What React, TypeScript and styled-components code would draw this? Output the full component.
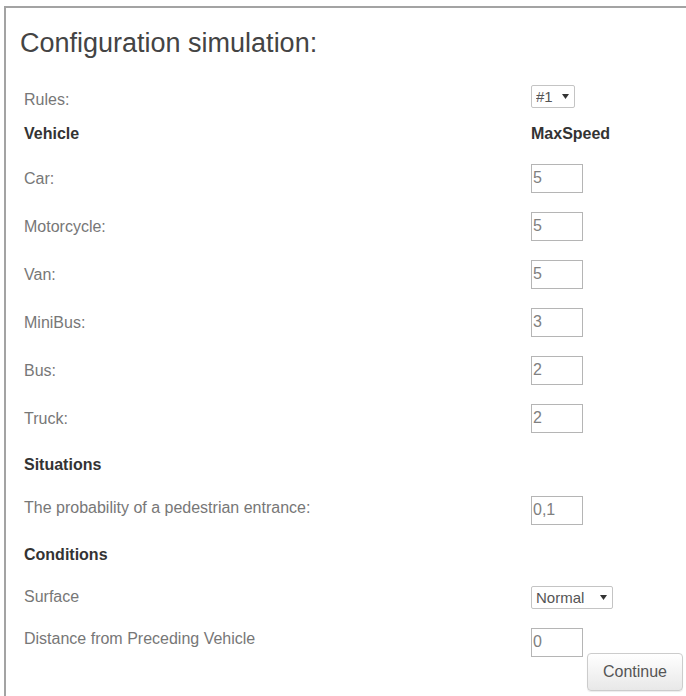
import { createGlobalStyle, styled } from "styled-components";

const GlobalStyle = createGlobalStyle`
  body {
    margin: 0;
    background: #fff;
    font-family: "Liberation Sans", Arial, sans-serif;
  }
`

const vehicles = [
  { name: "Car:", speed: "5" },
  { name: "Motorcycle:", speed: "5" },
  { name: "Van:", speed: "5" },
  { name: "MiniBus:", speed: "3" },
  { name: "Bus:", speed: "2" },
  { name: "Truck:", speed: "2" },
]

const Caret = () => (
  <svg width="7" height="5" viewBox="0 0 7 5">
    <path d="M0 0 L7 0 L3.5 5 Z" fill="#333" />
  </svg>
)

const Picker = ({ options, width }: { options: string[]; width: number }) => (
  <PickerBox $width={width}>
    <PickerSelect defaultValue={options[0]}>
      {options.map((o) => (
        <option key={o}>{o}</option>
      ))}
    </PickerSelect>
    <Caret />
  </PickerBox>
)

const App = () => {
  return (
    <>
      <GlobalStyle />
      <Panel>
        <Title>Configuration simulation:</Title>

        <Row $height={36}>
          <Label $nudge={4}>Rules:</Label>
          <Control>
            <Picker options={["#1", "#2", "#3"]} width={44} />
          </Control>
        </Row>

        <Row $height={40}>
          <Heading>Vehicle</Heading>
          <Control>
            <Heading>MaxSpeed</Heading>
          </Control>
        </Row>

        {vehicles.map((v) => (
          <Row $height={48} key={v.name}>
            <Label $nudge={1}>{v.name}</Label>
            <Control>
              <NumberInput defaultValue={v.speed} />
            </Control>
          </Row>
        ))}

        <Row $height={46}>
          <Heading>Situations</Heading>
        </Row>

        <Row $height={44}>
          <Label $nudge={-2}>The probability of a pedestrian entrance:</Label>
          <Control>
            <NumberInput defaultValue="0,1" />
          </Control>
        </Row>

        <Row $height={46}>
          <Heading>Conditions</Heading>
        </Row>

        <Row $height={38}>
          <Label>Surface</Label>
          <Control>
            <Picker options={["Normal", "Wet", "Icy"]} width={82} />
          </Control>
        </Row>

        <Row $height={52}>
          <Label $nudge={-3}>Distance from Preceding Vehicle</Label>
          <Control>
            <NumberInput defaultValue="0" />
          </Control>
        </Row>

        <Footer>
          <ContinueButton>Continue</ContinueButton>
        </Footer>
      </Panel>
    </>
  )
}

export default App

const Panel = styled.div`
  margin: 6px 0 0 4px;
  padding: 0 3px 0 18px;
  min-height: 690px;
  box-sizing: border-box;
  border-top: 2px solid #a3a3a3;
  border-left: 2px solid #a3a3a3;
`

const Title = styled.h1`
  margin: 20px 0 20px -4px;
  font-size: 27px;
  line-height: 30px;
  font-weight: normal;
  color: #444;
`

const Row = styled.div<{ $height: number }>`
  display: flex;
  align-items: center;
  height: ${(p) => p.$height}px;
`

const Label = styled.span<{ $nudge?: number }>`
  flex: 1;
  font-size: 16px;
  color: #777;
  padding-top: ${(p) => Math.max(p.$nudge ?? 0, 0) * 2}px;
  padding-bottom: ${(p) => Math.max(-(p.$nudge ?? 0), 0) * 2}px;
`

const Heading = styled.span`
  flex: 1;
  font-size: 16px;
  font-weight: bold;
  color: #333;
`

const Control = styled.div`
  width: 152px;
  display: flex;
  align-items: center;
`

const NumberInput = styled.input`
  width: 52px;
  height: 29px;
  box-sizing: border-box;
  border: 1px solid #b5b5b5;
  padding: 0 1px;
  font-family: "Liberation Sans", Arial, sans-serif;
  font-size: 16px;
  color: #808080;
  outline: none;
`

const PickerBox = styled.div<{ $width: number }>`
  width: ${(p) => p.$width}px;
  height: 23px;
  box-sizing: border-box;
  display: flex;
  align-items: center;
  gap: 4px;
  padding: 0 5px 0 4px;
  border: 1px solid #c4c4c4;
  border-radius: 2px;
  background: #fff;
`

const PickerSelect = styled.select`
  appearance: none;
  flex: 1;
  min-width: 0;
  border: none;
  background: transparent;
  padding: 0;
  font-family: "Liberation Sans", Arial, sans-serif;
  font-size: 15px;
  color: #555;
  outline: none;
`

const Footer = styled.div`
  display: flex;
  justify-content: flex-end;
  margin-top: -15px;
`

const ContinueButton = styled.button`
  width: 96px;
  height: 38px;
  border: 1px solid #ccc;
  border-radius: 4px;
  background: linear-gradient(#fff, #e8e8e8);
  box-shadow: 0 1px 1px rgba(0, 0, 0, 0.08);
  font-family: "Liberation Sans", Arial, sans-serif;
  font-size: 16px;
  color: #555;
`
